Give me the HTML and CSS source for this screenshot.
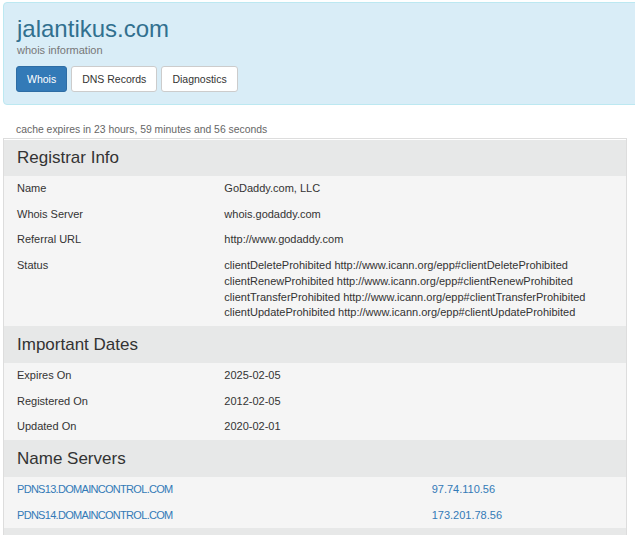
FILE: index.html
```html
<!DOCTYPE html>
<html>
<head>
<meta charset="utf-8">
<title>jalantikus.com whois</title>
<link rel="stylesheet" href="styles.css">
</head>
<body>
<div class="page">
  <header class="jumbo">
    <h1 class="title">jalantikus.com</h1>
    <p class="subtitle">whois information</p>
    <nav class="tabs">
      <a class="btn btn-primary">Whois</a>
      <a class="btn">DNS Records</a>
      <a class="btn">Diagnostics</a>
    </nav>
  </header>
  <p class="cache">cache expires in 23 hours, 59 minutes and 56 seconds</p>
  <section class="panel">
    <h2 class="sect first">Registrar Info</h2>
    <div class="row"><div class="lbl">Name</div><div class="val">GoDaddy.com, LLC</div></div>
    <div class="row"><div class="lbl">Whois Server</div><div class="val">whois.godaddy.com</div></div>
    <div class="row"><div class="lbl">Referral URL</div><div class="val">http://www.godaddy.com</div></div>
    <div class="row"><div class="lbl">Status</div><div class="val">clientDeleteProhibited http://www.icann.org/epp#clientDeleteProhibited<br>clientRenewProhibited http://www.icann.org/epp#clientRenewProhibited<br>clientTransferProhibited http://www.icann.org/epp#clientTransferProhibited<br>clientUpdateProhibited http://www.icann.org/epp#clientUpdateProhibited</div></div>
    <h2 class="sect">Important Dates</h2>
    <div class="row"><div class="lbl">Expires On</div><div class="val">2025-02-05</div></div>
    <div class="row"><div class="lbl">Registered On</div><div class="val">2012-02-05</div></div>
    <div class="row"><div class="lbl">Updated On</div><div class="val">2020-02-01</div></div>
    <h2 class="sect">Name Servers</h2>
    <div class="row ns"><a class="lnk host">PDNS13.DOMAINCONTROL.COM</a><a class="lnk">97.74.110.56</a></div>
    <div class="row ns"><a class="lnk host">PDNS14.DOMAINCONTROL.COM</a><a class="lnk">173.201.78.56</a></div>
    <h2 class="sect">&nbsp;</h2>
  </section>
</div>
</body>
</html>
```
FILE: styles.css
```css
html, body {
  margin: 0;
  padding: 0;
  overflow: hidden;
  background: #fff;
}
body {
  font-family: "Liberation Sans", Arial, sans-serif;
  font-size: 11px;
  color: #333;
}
.page {
  padding: 2px 0 0 3px;
  width: 624px;
}
.jumbo {
  background: #d9edf7;
  border: 1px solid #bce8f1;
  border-radius: 4px;
  padding: 12px 13px 12px 13px;
  margin-right: -20px;
}
.title {
  margin: 0;
  font-size: 24px;
  line-height: 27px;
  font-weight: normal;
  color: #31708f;
}
.subtitle {
  margin: 0;
  font-size: 11px;
  line-height: 16px;
  color: #777;
}
.tabs {
  display: flex;
  gap: 4px;
  margin: 8px 0 0 -1px;
}
.btn {
  display: block;
  font-size: 10.5px;
  line-height: 16px;
  padding: 4px 10px;
  border: 1px solid #ccc;
  border-radius: 3px;
  background: #fff;
  color: #333;
}
.btn-primary {
  background: #337ab7;
  border-color: #2e6da4;
  color: #fff;
}
.cache {
  margin: 17px 0 1px 13px;
  font-size: 10.4px;
  line-height: 15px;
  color: #666;
}
.panel {
  border: 1px solid #ddd;
  border-bottom: 0;
  background: #f5f5f5;
}
.sect {
  margin: 0;
  font-size: 17px;
  line-height: 21px;
  font-weight: normal;
  padding: 8px 13px;
  background: #e7e8e8;
  color: #333;
}
.sect.first {
  border-top: 1px solid #fff;
  padding-top: 7px;
}
.row {
  display: grid;
  grid-template-columns: 1fr 2fr;
  line-height: 1.42857;
}
.row.ns {
  grid-template-columns: 2fr 1fr;
}
.lbl, .val, .lnk {
  padding: 5px 13px;
}
.lnk {
  color: #337ab7;
}
.host {
  letter-spacing: -0.7px;
}
```
